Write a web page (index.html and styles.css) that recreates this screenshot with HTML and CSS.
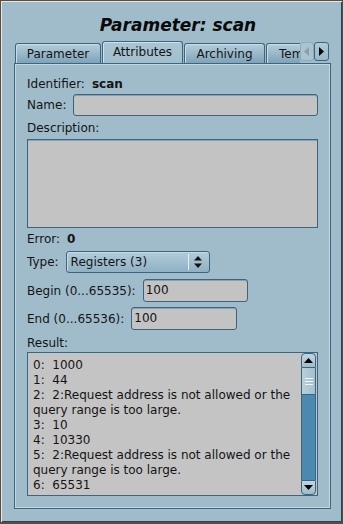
FILE: index.html
```html
<!DOCTYPE html>
<html lang="en">
<head>
<meta charset="UTF-8">
<title>Parameter: scan</title>
<link rel="stylesheet" href="styles.css">
</head>
<body>
<div class="window">
  <div class="title">Parameter: scan</div>

  <div class="tabbar">
    <div class="tabs">
      <div class="tab">Parameter</div>
      <div class="tab active">Attributes</div>
      <div class="tab">Archiving</div>
      <div class="tab">Template</div>
    </div>
    <div class="tab-scroll disabled">
      <svg width="6" height="9" viewBox="0 0 6 9"><path d="M5 0 L0 4.5 L5 9 Z" fill="#8aa0ad"/></svg>
    </div>
    <div class="tab-scroll">
      <svg width="6" height="9" viewBox="0 0 6 9"><path d="M0 0 L5 4.5 L0 9 Z" fill="#000"/></svg>
    </div>
  </div>

  <div class="pane">
    <div class="row r-ident">
      <span>Identifier:</span><b class="value">scan</b>
    </div>
    <div class="row r-name">
      <span>Name:</span><div class="field grow"></div>
    </div>
    <div class="row r-desc"><span>Description:</span></div>
    <div class="field area"></div>
    <div class="row r-error">
      <span>Error:</span><b class="value">0</b>
    </div>
    <div class="row r-type">
      <span>Type:</span>
      <div class="combo">
        <span class="combo-text">Registers (3)</span>
        <span class="combo-sep"></span>
        <svg class="combo-arrows" width="8" height="12" viewBox="0 0 8 12"><path d="M4 0 L8 4.5 L0 4.5 Z M0 7.5 L8 7.5 L4 12 Z" fill="#111"/></svg>
      </div>
    </div>
    <div class="row r-begin">
      <span>Begin (0...65535):</span><div class="field begin">100</div>
    </div>
    <div class="row r-end">
      <span>End (0...65536):</span><div class="field end">100</div>
    </div>
    <div class="row r-result"><span>Result:</span></div>
    <div class="result">
      <div class="result-text">0:  1000
1:  44
2:  2:Request address is not allowed or the query range is too large.
3:  10
4:  10330
5:  2:Request address is not allowed or the query range is too large.
6:  65531</div>
      <div class="scrollbar">
        <div class="sb-btn up">
          <svg width="9" height="5" viewBox="0 0 9 5"><path d="M4.5 0 L9 5 L0 5 Z" fill="#000"/></svg>
        </div>
        <div class="sb-thumb">
          <span></span><span></span><span></span>
        </div>
        <div class="sb-trough"></div>
        <div class="sb-btn down">
          <svg width="9" height="5" viewBox="0 0 9 5"><path d="M0 0 L9 0 L4.5 5 Z" fill="#000"/></svg>
        </div>
      </div>
    </div>
  </div>
</div>
</body>
</html>
```

FILE: styles.css
```css
* {
  box-sizing: border-box;
}

body {
  margin: 0;
  background: #5e4b3f;
  font-family: "DejaVu Sans", sans-serif;
  font-size: 12px;
  color: #141414;
}

.window {
  width: 343px;
  height: 524px;
  border: 1px solid #5e4b3f;
  border-bottom-width: 2px;
  background: #a0bccb;
  box-shadow: inset 1px 1px 0 #dfe9ef, inset -1px -1px 0 #2c4352;
  display: flex;
  flex-direction: column;
}

.title {
  height: 40px;
  padding: 14px 0 0 13px;
  line-height: 20px;
  text-align: center;
  font-size: 17px;
  font-weight: bold;
  font-style: italic;
  color: #0a0a0a;
}

/* tabs */
.tabbar {
  display: flex;
  align-items: flex-end;
  height: 22px;
  margin-left: 14px;
  margin-right: 11px;
}

.tabs {
  display: flex;
  align-items: flex-end;
  width: 285px;
  overflow: hidden;
}

.tab {
  flex: none;
  height: 20px;
  padding: 0 9px;
  line-height: 20px;
  border: 1px solid #3d6580;
  border-bottom: none;
  border-radius: 3px 3px 0 0;
  background: linear-gradient(#b4cdda, #7fa3b9);
  box-shadow: inset 1px 1px 0 #c9dbe4;
  text-align: center;
  margin-right: 1px;
}

.tab:nth-child(1) { width: 86px; }
.tab:nth-child(2) { width: 81px; }
.tab:nth-child(3) { width: 81px; }
.tab:nth-child(4) { width: 82px; text-align: left; padding-left: 12px; }

.tab.active {
  height: 22px;
  line-height: 21px;
  background: linear-gradient(#a9c5d3, #a2bfce);
  box-shadow: inset 1px 1px 0 #d2e2ea;
}

.tab-scroll {
  flex: none;
  width: 15px;
  height: 19px;
  margin-bottom: 2px;
  border: 1px solid #3d6580;
  border-radius: 3px;
  background: linear-gradient(#b0cad7, #98b8c9);
  display: flex;
  align-items: center;
  justify-content: center;
}

.tab-scroll.disabled {
  width: 14px;
  border-color: #8eaabb;
  background: #a9c3d0;
}

/* pane */
.pane {
  flex: none;
  height: 446px;
  margin: 0 11px 0 13px;
  border: 1px solid #3d6580;
  box-shadow: inset 1px 1px 0 #c4d6e0, inset -1px -1px 0 #c4d6e0;
  padding: 11px 12px 0 12px;
  display: flex;
  flex-direction: column;
}

.row {
  display: flex;
  align-items: center;
  flex: none;
}

.r-ident { height: 18px; }
.r-name { height: 22px; margin-top: 1px; }
.r-desc { height: 18px; margin-top: 3px; }
.r-error { height: 18px; margin-top: 2px; }
.r-type { height: 22px; margin-top: 3px; }
.r-begin { height: 23px; margin-top: 6px; }
.r-end { height: 23px; margin-top: 5px; }
.r-result { height: 18px; margin-top: 4px; }

.value {
  margin-left: 7px;
}

.field {
  height: 100%;
  margin-left: 7px;
  background: #c3c3c3;
  border: 1px solid #3a6480;
  border-radius: 3px;
  box-shadow: inset 0 1px 0 #8f9ea8;
  line-height: 21px;
  padding-left: 2px;
}

.grow {
  flex: 1;
}

.begin {
  width: 105px;
}

.end {
  width: 106px;
}

.area {
  height: 89px;
  margin: 2px 0 0 0;
  border-radius: 0;
  flex: none;
}

.combo {
  width: 144px;
  height: 100%;
  margin-left: 7px;
  border: 1px solid #3a6480;
  border-radius: 3px;
  background: linear-gradient(#b2ccd9, #8fb1c4);
  box-shadow: inset 1px 1px 0 #c8dbe5;
  display: flex;
  align-items: center;
}

.combo-text {
  padding-left: 4px;
  flex: 1;
}

.combo-sep {
  width: 1px;
  height: 16px;
  background: #e6eef2;
  margin-right: 5px;
}

.combo-arrows {
  margin-right: 7px;
}

/* result box */
.result {
  flex: none;
  height: 144px;
  display: flex;
  border: 1px solid #3d6580;
  background: #c4c4c4;
}

.result-text {
  flex: 1;
  padding: 5px 0 0 5px;
  line-height: 15px;
  white-space: pre-wrap;
  overflow: hidden;
}

.scrollbar {
  flex: none;
  width: 15px;
  margin: 0 1px 0 2px;
  display: flex;
  flex-direction: column;
}

.sb-btn {
  flex: none;
  height: 15px;
  border: 1px solid #3a6480;
  background: linear-gradient(#c0d6e1, #9fbdcd);
  display: flex;
  align-items: center;
  justify-content: center;
}

.sb-btn.up {
  border-radius: 4px 4px 0 0;
}

.sb-btn.down {
  border-radius: 0 0 4px 4px;
}

.sb-thumb {
  flex: none;
  height: 27px;
  border: 1px solid #3a6480;
  border-top: none;
  background: linear-gradient(90deg, #b8d0dc, #a3c0cf);
  display: flex;
  flex-direction: column;
  align-items: center;
  justify-content: center;
  gap: 2px;
}

.sb-thumb span {
  width: 8px;
  height: 1px;
  background: #f2f6f8;
}

.sb-trough {
  flex: 1;
  background: #4b89b0;
  border-left: 1px solid #3a6480;
  border-right: 1px solid #3a6480;
}
```
